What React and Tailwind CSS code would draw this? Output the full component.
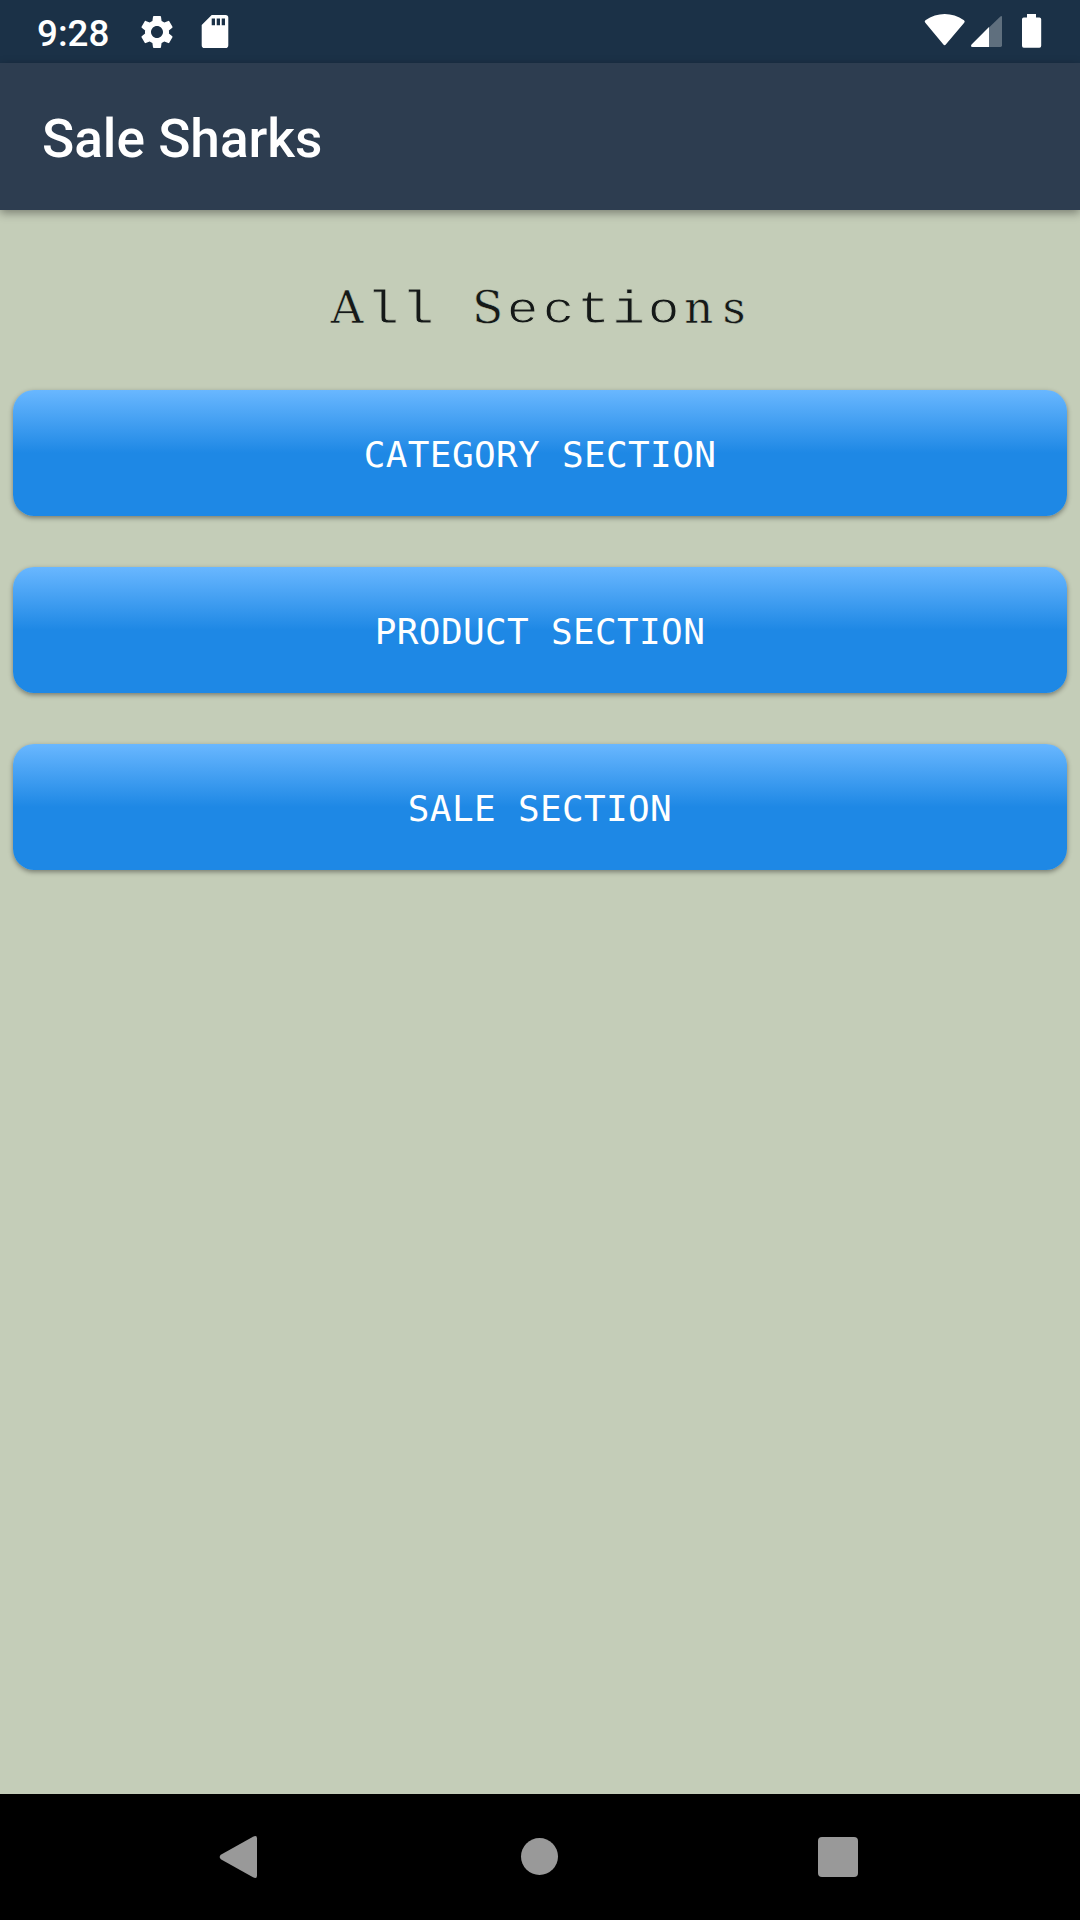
import { MdSettings } from "react-icons/md";

const sections = ["CATEGORY SECTION", "PRODUCT SECTION", "SALE SECTION"];

function StatusBar() {
  return (
    <div className="flex h-[63px] items-start justify-between bg-[#1b3147] pl-[37px] text-white">
      <div className="flex">
        <span className="mt-[12px] w-[100px] font-['Roboto',sans-serif] text-[36.75px] leading-[43px] font-medium">
          9:28
        </span>
        <MdSettings className="mt-[12px] size-10" />
        <svg className="mt-[15px] ml-[24px]" width="28" height="33" viewBox="0 0 28 33" fill="currentColor">
          <path
            fillRule="evenodd"
            d="M10.7 0H24.5Q27.3 0 27.3 2.8V30.2Q27.3 33 24.5 33H3.5Q.7 33 .7 30.2V10ZM10.7 3.5V10.3H14V3.5ZM15.7 3.5V10.3H19V3.5ZM20.7 3.5V10.3H24V3.5Z"
          />
        </svg>
      </div>
      <svg width="156" height="63" viewBox="924 0 156 63" fill="currentColor">
        <path d="M925.3 22.8Q924 21.4 925.4 20.2C937.5 12 952 12 964 20.2Q965.4 21.4 964.2 22.8L946 44.3Q944.6 46 943.2 44.3Z" />
        <path d="M1002 17.1Q1002 15 1000.4 16.5L989 27.5V47H1000.6Q1002 47 1002 45.6Z" fillOpacity="0.3" />
        <path d="M989 27L971.6 44.5Q970 47 972.6 47H989Z" />
        <path d="M1027 14H1036V17.5H1039.4Q1041.2 17.5 1041.2 19.3V45.8Q1041.2 47.7 1039.4 47.7H1023.8Q1022 47.7 1022 45.8V19.3Q1022 17.5 1023.8 17.5H1027Z" />
      </svg>
    </div>
  );
}

// Typewriter lettering: slab capitals mixed with monoline round letters.
const slab = "inline-block w-[35.2px] font-['DejaVu_Serif',serif] text-[45px] [-webkit-text-stroke:0.5px_#c4cdb8]";
const round = "inline-block w-[35.2px] font-['Liberation_Mono',monospace] text-[44px] scale-x-[1.2] [-webkit-text-stroke:0.9px_#c4cdb8]";
const stem = "inline-block w-[35.2px] font-['Liberation_Mono',monospace] text-[46px] scale-x-[1.2] [-webkit-text-stroke:0.8px_#c4cdb8]";

function letterStyle(letter) {
  if ("lit".includes(letter)) return stem;
  if ("eco".includes(letter)) return round;
  return slab;
}

function TypewriterTitle({ text }) {
  return (
    <h2 className="mt-[66px] h-[63px] pl-px text-center font-['DejaVu_Serif',serif] text-[45px] leading-[64px] whitespace-pre text-[#151918]">
      {[...text].map((letter, i) => (
        <span key={i} className={letterStyle(letter)}>{letter}</span>
      ))}
    </h2>
  );
}

function NavigationBar() {
  return (
    <div className="flex h-[126px] items-center justify-between bg-black pr-[222px] pl-[219px] text-[#999999]">
      <svg width="39" height="44" viewBox="0 0 39 44" fill="currentColor">
        <path d="M1.8 24.2Q-.4 22 1.8 19.8L34 1.8Q38 -.2 38 3.3V40.7Q38 44.2 34 42.2Z" />
      </svg>
      <div className="mr-[-3px] mb-px size-[37px] rounded-full bg-[#999999]" />
      <div className="size-10 rounded-[4px] bg-[#999999]" />
    </div>
  );
}

export default function App() {
  return (
    <div className="flex h-[1920px] w-[1080px] flex-col bg-[#c4cdb8]">
      <StatusBar />
      <header className="flex h-[147px] items-center bg-[#2d3d50] pt-[5px] pl-[42px] shadow-[0_3px_9px_rgba(0,0,0,0.38)]">
        <h1 className="font-['Roboto',sans-serif] text-[53.2px] leading-[62px] font-medium text-white">
          Sale Sharks
        </h1>
      </header>
      <main className="flex flex-1 flex-col px-[13px]">
        <TypewriterTitle text="All Sections" />
        <div className="mt-[51px] flex flex-col gap-[51px]">
          {sections.map((name) => (
            <button
              key={name}
              className="h-[126px] rounded-[21px] bg-[linear-gradient(180deg,#69b7ff_0%,#1e88e5_50%,#1e88e5_100%)] pt-[2px] font-['DejaVu_Sans_Mono',monospace] text-[36px] leading-[43px] tracking-[0.35px] text-white shadow-[0_2px_5px_rgba(0,0,0,0.4)]"
            >
              {name}
            </button>
          ))}
        </div>
      </main>
      <NavigationBar />
    </div>
  );
}
